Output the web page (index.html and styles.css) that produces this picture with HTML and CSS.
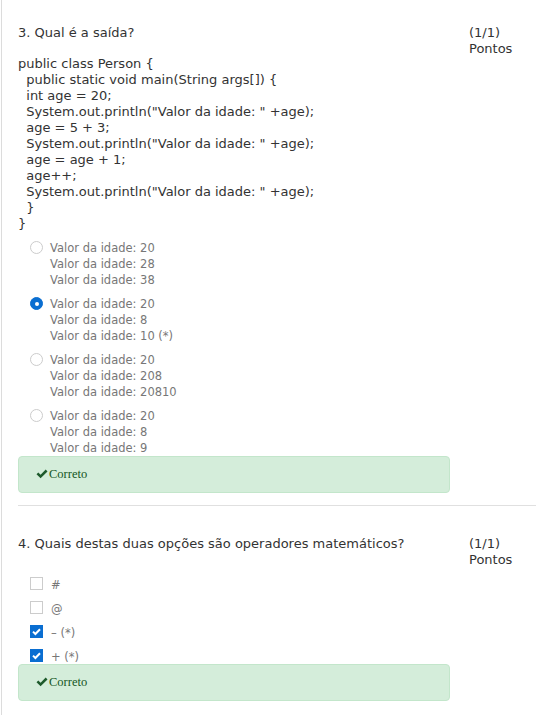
FILE: index.html
```html
<!DOCTYPE html>
<html lang="pt">
<head>
<meta charset="utf-8">
<title>Quiz</title>
<link rel="stylesheet" href="styles.css">
</head>
<body>
<div class="page">
  <section class="question">
    <div class="q-head">
      <div class="q-text">
        <p class="q-title">3. Qual é a saída?</p>
        <pre class="code">public class Person {
  public static void main(String args[]) {
  int age = 20;
  System.out.println("Valor da idade: " +age);
  age = 5 + 3;
  System.out.println("Valor da idade: " +age);
  age = age + 1;
  age++;
  System.out.println("Valor da idade: " +age);
  }
}</pre>
      </div>
      <div class="points">(1/1)<br>Pontos</div>
    </div>
    <ul class="options">
      <li class="opt"><span class="radio"></span><span class="opt-text">Valor da idade: 20<br>Valor da idade: 28<br>Valor da idade: 38</span></li>
      <li class="opt"><span class="radio checked"></span><span class="opt-text">Valor da idade: 20<br>Valor da idade: 8<br>Valor da idade: 10 (*)</span></li>
      <li class="opt"><span class="radio"></span><span class="opt-text">Valor da idade: 20<br>Valor da idade: 208<br>Valor da idade: 20810</span></li>
      <li class="opt"><span class="radio"></span><span class="opt-text">Valor da idade: 20<br>Valor da idade: 8<br>Valor da idade: 9</span></li>
    </ul>
    <div class="result"><svg class="tick" viewBox="0 0 12 10" width="12" height="10"><path d="M0.5 5.2 L2.3 3.4 L4.6 5.7 L9.7 0.6 L11.5 2.4 L4.6 9.3 Z" fill="#1d5a2b"/></svg>Correto</div>
  </section>
  <section class="question q4">
    <div class="q-head">
      <div class="q-text">
        <p class="q-title">4. Quais destas duas opções são operadores matemáticos?</p>
      </div>
      <div class="points">(1/1)<br>Pontos</div>
    </div>
    <ul class="checks">
      <li class="chk"><span class="box"></span><span class="opt-text">#</span></li>
      <li class="chk"><span class="box"></span><span class="opt-text">@</span></li>
      <li class="chk"><span class="box checked"><svg viewBox="0 0 13 13" width="13" height="13"><path d="M3 6.6 L5.4 9 L10 4.2" fill="none" stroke="#fff" stroke-width="2"/></svg></span><span class="opt-text">– (*)</span></li>
      <li class="chk"><span class="box checked"><svg viewBox="0 0 13 13" width="13" height="13"><path d="M3 6.6 L5.4 9 L10 4.2" fill="none" stroke="#fff" stroke-width="2"/></svg></span><span class="opt-text">+ (*)</span></li>
    </ul>
    <div class="result"><svg class="tick" viewBox="0 0 12 10" width="12" height="10"><path d="M0.5 5.2 L2.3 3.4 L4.6 5.7 L9.7 0.6 L11.5 2.4 L4.6 9.3 Z" fill="#1d5a2b"/></svg>Correto</div>
  </section>
</div>
</body>
</html>
```

FILE: styles.css
```css
html, body {
  margin: 0;
  padding: 0;
  background: #fff;
}
body {
  font-family: "DejaVu Sans", Verdana, sans-serif;
  color: #333;
}
.page {
  margin-left: 1px;
  border-left: 1px solid #dcdcdc;
  padding: 25px 16px 0 16px;
  min-height: 715px;
  box-sizing: border-box;
}
.question {
  border-bottom: 1px solid #e0e0e0;
  padding-bottom: 12px;
}
.q4 {
  margin-top: 30px;
}
.q-head {
  display: flex;
}
.q-text {
  flex: 1;
}
.q-title {
  margin: 0;
  font-size: 13px;
  line-height: 16px;
}
.code {
  margin: 15px 0 0 0;
  font-family: "DejaVu Sans", Verdana, sans-serif;
  font-size: 13px;
  line-height: 16px;
  white-space: pre;
  color: #333;
}
.points {
  width: 67px;
  font-size: 13px;
  line-height: 16px;
}
.options {
  list-style: none;
  margin: 8px 0 0 0;
  padding: 0 0 0 12px;
}
.opt {
  display: flex;
  align-items: flex-start;
  margin-bottom: 8px;
}
.opt:last-child {
  margin-bottom: 0;
}
.opt-text {
  font-size: 11.5px;
  line-height: 16px;
  color: #777;
  margin-left: 7px;
}
.radio {
  width: 11px;
  height: 11px;
  border: 1px solid #ccc;
  border-radius: 50%;
  margin-top: 1px;
  flex: none;
  background: #fff;
  position: relative;
}
.radio.checked {
  background: #0a6ed1;
  border-color: #0a6ed1;
}
.radio.checked::after {
  content: "";
  position: absolute;
  left: 3.5px;
  top: 3.5px;
  width: 4px;
  height: 4px;
  border-radius: 50%;
  background: #fff;
}
.checks {
  list-style: none;
  margin: 9px 0 0 0;
  padding: 0 0 0 12px;
}
.chk {
  display: flex;
  align-items: center;
  height: 16px;
  margin-bottom: 8px;
}
.chk:last-child {
  margin-bottom: 0;
}
.box {
  width: 11px;
  height: 11px;
  border: 1px solid #ccc;
  flex: none;
  display: block;
  background: #fff;
  position: relative;
  top: -2px;
}
.box.checked {
  width: 13px;
  height: 13px;
  border: none;
  background: #0a6ed1;
}
.box svg {
  display: block;
}
.chk .opt-text {
  margin-left: 8px;
}
.result {
  width: 432px;
  box-sizing: border-box;
  height: 37px;
  margin-top: 0;
  background: #d4edda;
  border: 1px solid #c3e6cb;
  border-radius: 4px;
  padding: 0 0 0 17px;
  display: flex;
  align-items: center;
  font-family: "Liberation Serif", "Times New Roman", serif;
  font-size: 12.5px;
  color: #155724;
}
.q4 .result {
  margin-top: -1px;
}
.q4 {
  padding-bottom: 14px;
}
.tick {
  display: block;
  margin-right: 1px;
  position: relative;
  top: -1px;
}
```
